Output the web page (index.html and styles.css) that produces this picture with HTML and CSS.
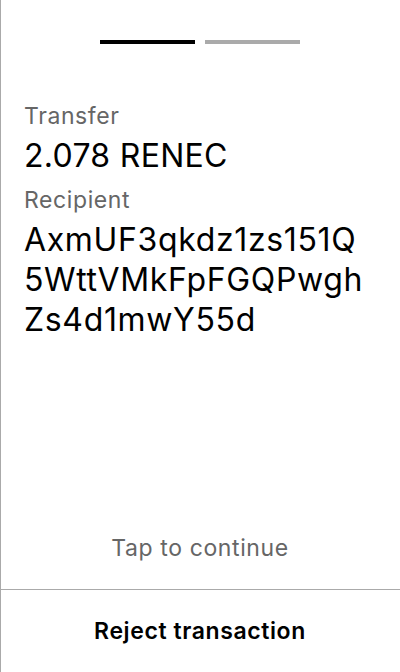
FILE: index.html
```html
<!DOCTYPE html>
<html>
<head>
<meta charset="utf-8">
<link rel="stylesheet" href="styles.css">
</head>
<body>
<div class="screen">
  <div class="progress">
    <div class="bar bar-active"></div>
    <div class="bar bar-inactive"></div>
  </div>
  <div class="content">
    <div class="label">Transfer</div>
    <div class="amount">2.078 RENEC</div>
    <div class="label label-recipient">Recipient</div>
    <div class="address">AxmUF3qkdz1zs151Q<br>5WttVMkFpFGQPwgh<br>Zs4d1mwY55d</div>
  </div>
  <div class="tap">Tap to continue</div>
  <div class="reject">Reject transaction</div>
</div>
</body>
</html>
```
FILE: styles.css
```css
html, body {
  margin: 0;
  padding: 0;
  background: #fff;
}
body {
  font-family: Inter, "Noto Sans", sans-serif;
  color: #000;
}
.screen {
  width: 400px;
  height: 672px;
  box-shadow: inset 1px 0 0 #aaaaaa;
  display: flex;
  flex-direction: column;
}
.progress {
  display: flex;
  justify-content: center;
  gap: 10px;
  padding-top: 40px;
}
.bar {
  width: 95px;
  height: 4px;
}
.bar-active { background: #000; }
.bar-inactive { background: #aaaaaa; }
.content {
  padding: 57px 24px 0 24px;
  flex: 1;
}
.label {
  font-size: 23px;
  letter-spacing: 0.6px;
  color: #666;
  line-height: 30px;
}
.amount {
  font-size: 32px;
  letter-spacing: 0.3px;
  line-height: 40px;
  margin-top: 5px;
}
.label-recipient {
  margin-top: 9px;
}
.address {
  font-size: 32px;
  letter-spacing: 0.65px;
  line-height: 40px;
  margin-top: 5px;
}
.tap {
  text-align: center;
  font-size: 23px;
  letter-spacing: 0.6px;
  color: #666;
  line-height: 30px;
  padding-bottom: 26px;
}
.reject {
  border-top: 1px solid #aaaaaa;
  text-align: center;
  font-size: 23px;
  letter-spacing: 0.6px;
  font-weight: 600;
  height: 82px;
  line-height: 82px;
}
```
